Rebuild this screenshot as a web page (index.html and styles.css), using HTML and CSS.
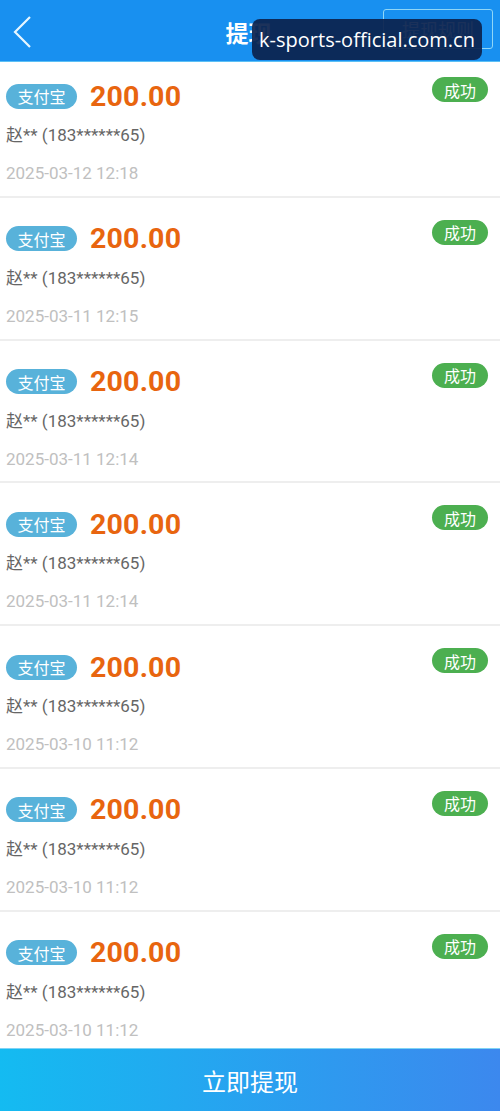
FILE: index.html
```html
<!DOCTYPE html>
<html lang="zh-CN">
<head>
    <meta charset="UTF-8">
    <meta name="viewport" content="width=device-width, initial-scale=1.0">
    <title>提现</title>
    <link rel="stylesheet" href="styles.css">
</head>
<body>
    <div class="page">
        <div class="top-bar">
            <div class="back">
                <svg width="20" height="34" viewBox="0 0 20 34"><polyline points="17,2 2,17 17,32" fill="none" stroke="#e6f6ff" stroke-width="2.2" stroke-linejoin="miter"/></svg>
            </div>
            <div class="title">提现</div>
            <div class="right">
                <span class="rules-btn">提现规则</span>
            </div>
            <div class="watermark">k-sports-official.com.cn</div>
        </div>

        <div class="records">
            <div class="record">
                <div class="row">
                    <span class="pay-tag">支付宝</span>
                    <span class="amount">200.00</span>
                    <span class="status">成功</span>
                </div>
                <div class="account">赵** (183******65)</div>
                <div class="time">2025-03-12 12:18</div>
            </div>
            <div class="record">
                <div class="row">
                    <span class="pay-tag">支付宝</span>
                    <span class="amount">200.00</span>
                    <span class="status">成功</span>
                </div>
                <div class="account">赵** (183******65)</div>
                <div class="time">2025-03-11 12:15</div>
            </div>
            <div class="record">
                <div class="row">
                    <span class="pay-tag">支付宝</span>
                    <span class="amount">200.00</span>
                    <span class="status">成功</span>
                </div>
                <div class="account">赵** (183******65)</div>
                <div class="time">2025-03-11 12:14</div>
            </div>
            <div class="record">
                <div class="row">
                    <span class="pay-tag">支付宝</span>
                    <span class="amount">200.00</span>
                    <span class="status">成功</span>
                </div>
                <div class="account">赵** (183******65)</div>
                <div class="time">2025-03-11 12:14</div>
            </div>
            <div class="record">
                <div class="row">
                    <span class="pay-tag">支付宝</span>
                    <span class="amount">200.00</span>
                    <span class="status">成功</span>
                </div>
                <div class="account">赵** (183******65)</div>
                <div class="time">2025-03-10 11:12</div>
            </div>
            <div class="record">
                <div class="row">
                    <span class="pay-tag">支付宝</span>
                    <span class="amount">200.00</span>
                    <span class="status">成功</span>
                </div>
                <div class="account">赵** (183******65)</div>
                <div class="time">2025-03-10 11:12</div>
            </div>
            <div class="record">
                <div class="row">
                    <span class="pay-tag">支付宝</span>
                    <span class="amount">200.00</span>
                    <span class="status">成功</span>
                </div>
                <div class="account">赵** (183******65)</div>
                <div class="time">2025-03-10 11:12</div>
            </div>
        </div>

        <div class="withdraw-btn">立即提现</div>
    </div>
</body>
</html>
```

FILE: styles.css
```css
body {
    margin: 0;
    font-family: Roboto, "Noto Sans CJK SC", sans-serif;
    background: #fff;
}
.page {
    display: flex;
    flex-direction: column;
    width: 500px;
    height: 1111px;
    overflow: hidden;
}
.top-bar {
    position: relative;
    z-index: 2;
    flex: 0 0 62px;
    display: grid;
    grid-template-columns: 1fr auto 1fr;
    align-items: center;
    background: #1890f0;
    border-bottom: 1px solid #5cc0f5;
    box-sizing: border-box;
}
.back {
    display: flex;
    align-items: center;
    padding-left: 13px;
    padding-top: 2px;
}
.title {
    color: #fff;
    font-size: 23px;
    font-weight: bold;
    padding-top: 2px;
    margin-left: -3px;
}
.right {
    display: flex;
    justify-content: flex-end;
    padding-right: 7px;
    align-self: start;
    padding-top: 9px;
}
.rules-btn {
    display: flex;
    align-items: center;
    justify-content: center;
    width: 110px;
    height: 40px;
    box-sizing: border-box;
    border: 1.5px solid #8fd6f7;
    border-radius: 3px;
    color: #d8efff;
    font-size: 18px;
}
.watermark {
    position: absolute;
    left: 252px;
    top: 19px;
    width: 230px;
    height: 41px;
    box-sizing: border-box;
    background: rgba(12, 34, 78, 0.93);
    border-radius: 8px;
    color: #fff;
    font-size: 20px;
    font-family: "Open Sans", "Noto Sans", sans-serif;
    display: flex;
    align-items: center;
    justify-content: center;
}
.records {
    flex: 1;
    overflow: hidden;
    margin-top: -7px;
}
.record {
    height: 142.8px;
    box-sizing: border-box;
    padding: 26px 12px 0 6px;
    border-bottom: 2px solid #eeeeee;
    background: #fff;
}
.row {
    display: flex;
    align-items: center;
    height: 30px;
}
.pay-tag {
    display: inline-flex;
    align-items: center;
    justify-content: center;
    width: 71px;
    height: 25px;
    border-radius: 13px;
    background: #58b2da;
    color: #fff;
    font-size: 16px;
}
.amount {
    margin-left: 13px;
    color: #e8650f;
    font-size: 28.5px;
    font-weight: bold;
    letter-spacing: 0.2px;
}
.status {
    margin-left: auto;
    align-self: flex-start;
    margin-top: -4px;
    display: inline-flex;
    align-items: center;
    justify-content: center;
    width: 56px;
    height: 25px;
    border-radius: 13px;
    background: #4caf50;
    color: #fff;
    font-size: 16px;
}
.account {
    margin-top: 12px;
    color: #666;
    font-size: 17px;
    line-height: 24px;
}
.time {
    margin-top: 14px;
    color: #c0c0c0;
    font-size: 17px;
    line-height: 24px;
}
.withdraw-btn {
    position: relative;
    z-index: 2;
    flex: 0 0 63px;
    display: flex;
    align-items: center;
    justify-content: center;
    background: linear-gradient(90deg, #14bbf1, #3c88ee);
    border-top: 1px solid #7fd3f5;
    box-sizing: border-box;
    color: #fff;
    font-size: 24px;
    font-family: "Noto Sans CJK SC", sans-serif;
}
```
